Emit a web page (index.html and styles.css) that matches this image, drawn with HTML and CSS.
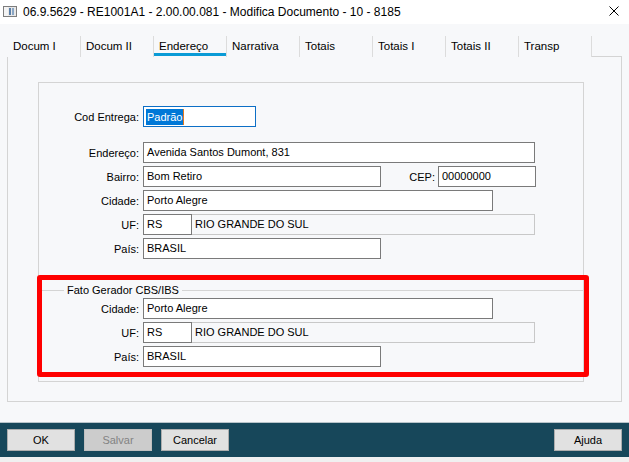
FILE: index.html
```
<!DOCTYPE html>
<html>
<head>
    <title>Modifica Documento</title>
    <link rel="stylesheet" href="styles.css">
</head>
<body>
    <div class="titlebar">
        <svg class="app-icon" width="14" height="11" viewBox="0 0 14 11">
            <rect x="0.5" y="0.5" width="13" height="10" fill="#e8e8e8" stroke="#7d7d7d"/>
            <rect x="1" y="1" width="4" height="9" fill="#f4f4f4"/>
            <rect x="6" y="2" width="2" height="7" fill="#5a7fa8"/>
            <rect x="9" y="2" width="2" height="7" fill="#8aa6c4"/>
        </svg>
        <span class="title">06.9.5629 - RE1001A1 - 2.00.00.081 - Modifica Documento - 10 - 8185</span>
        <svg class="close" width="10" height="10" viewBox="0 0 10 10">
            <path d="M0.5 0.5 L9.5 9.5 M9.5 0.5 L0.5 9.5" stroke="#000" stroke-width="1"/>
        </svg>
    </div>

    <div class="tabs">
        <div class="tab">Docum I</div>
        <div class="tab">Docum II</div>
        <div class="tab active">Endereço</div>
        <div class="tab">Narrativa</div>
        <div class="tab">Totais</div>
        <div class="tab">Totais I</div>
        <div class="tab">Totais II</div>
        <div class="tab">Transp</div>
        <div class="tab-rest"></div>
    </div>

    <div class="page">
        <div class="group">
            <div class="row first">
                <label>Cod Entrega:</label>
                <div class="field focus w-cod"><span class="sel">Padrão</span><span class="caret"></span></div>
            </div>

            <div class="row">
                <label>Endereço:</label>
                <div class="field w-full">Avenida Santos Dumont, 831</div>
            </div>
            <div class="row">
                <label>Bairro:</label>
                <div class="field w-mid">Bom Retiro</div>
                <label class="cep">CEP:</label>
                <div class="field w-cep">00000000</div>
            </div>
            <div class="row">
                <label>Cidade:</label>
                <div class="field w-city">Porto Alegre</div>
            </div>
            <div class="row">
                <label>UF:</label>
                <div class="field w-uf">RS</div>
                <div class="field off w-ufdesc">RIO GRANDE DO SUL</div>
            </div>
            <div class="row">
                <label>País:</label>
                <div class="field w-mid">BRASIL</div>
            </div>

            <div class="subgroup">
                <div class="legend"><span>Fato Gerador CBS/IBS</span></div>
                <div class="row tight">
                    <label>Cidade:</label>
                    <div class="field w-city">Porto Alegre</div>
                </div>
                <div class="row">
                    <label>UF:</label>
                    <div class="field w-uf">RS</div>
                    <div class="field off w-ufdesc">RIO GRANDE DO SUL</div>
                </div>
                <div class="row">
                    <label>País:</label>
                    <div class="field w-mid">BRASIL</div>
                </div>
            </div>
        </div>
    </div>

    <div class="footer">
        <button class="btn">OK</button>
        <button class="btn disabled">Salvar</button>
        <button class="btn">Cancelar</button>
        <div class="spacer"></div>
        <button class="btn">Ajuda</button>
    </div>
    <div class="bottom-strip"></div>

    <div class="highlight"></div>
</body>
</html>
```

FILE: styles.css
```
body {
    margin: 0;
    width: 629px;
    height: 462px;
    overflow: hidden;
    background: #f7f8fa;
    font-family: "Liberation Sans", Arial, sans-serif;
    font-size: 11px;
    color: #000;
    position: relative;
}

.titlebar {
    height: 24px;
    background: #fff;
    display: flex;
    align-items: center;
}
.app-icon { margin-left: 3px; margin-top: -1px; }
.title { margin-left: 6px; font-size: 12px; margin-top: -1px; }
.close { margin-left: auto; margin-right: 10px; margin-top: -2px; }

.tabs {
    display: flex;
    padding: 12px 0 0 8px;
    height: 21px;
}
.tab {
    width: 67px;
    border-right: 1px solid #dcdcdc;
    padding-left: 5px;
    line-height: 20px;
    font-size: 11.5px;
    position: relative;
}
.tab.active::after {
    content: "";
    position: absolute;
    left: 0;
    right: 0;
    bottom: 1px;
    height: 3px;
    background: #0a9bd6;
}
.tab-rest {
    flex: 1;
    margin-right: 7px;
    border-bottom: 1px solid #d4d4d4;
}

.page {
    margin: 0 7px;
    height: 345px;
    border: 1px solid #d4d4d4;
    border-top: none;
    padding: 25px 0 0 30px;
    box-sizing: border-box;
}

.group {
    width: 546px;
    height: 300px;
    border: 1px solid #d4d4d4;
    box-sizing: border-box;
    padding-top: 23px;
}

.row {
    display: flex;
    align-items: center;
    height: 21px;
    margin-bottom: 3px;
}
.row.first { margin-bottom: 15px; }
.row label {
    width: 100px;
    text-align: right;
    margin-right: 4px;
}
.row label.cep {
    width: auto;
    margin-left: auto;
    margin-right: 3px;
}

.field {
    height: 21px;
    box-sizing: border-box;
    border: 1px solid #7a7a7a;
    background: #fff;
    padding-left: 3px;
    line-height: 19px;
    white-space: nowrap;
    overflow: hidden;
}
.field.off {
    border-color: #c8c8c8;
    background: #f7f8fa;
    border-left: none;
}
.field.focus {
    border-color: #0d6fc6;
    display: flex;
    align-items: center;
    padding-left: 2px;
}
.sel {
    background: #0078d7;
    color: #fff;
    line-height: 16px;
    padding: 0 1px;
}
.caret {
    width: 1px;
    height: 16px;
    background: #e57a1f;
}

.w-cod { width: 113px; }
.w-full { width: 392px; }
.w-mid { width: 238px; }
.w-cep { width: 98px; margin-right: 47px; }
.w-city { width: 350px; }
.w-uf { width: 49px; }
.w-ufdesc { width: 343px; }

.subgroup {
    margin-top: 24px;
}
.legend {
    height: 14px;
    display: flex;
    align-items: center;
    margin-left: 3px;
    margin-bottom: -6px;
}
.legend::before {
    content: "";
    width: 22px;
    border-top: 1px solid #d4d4d4;
}
.legend::after {
    content: "";
    flex: 1;
    border-top: 1px solid #d4d4d4;
}
.legend span {
    padding: 0 3px;
}
.row.tight { margin-top: 7px; }

.footer {
    margin-top: 20px;
    height: 34px;
    background: #17475a;
    border-top: 1px solid #b8c4ca;
    display: flex;
    align-items: center;
    padding: 0 7px;
    gap: 9px;
}
.spacer { flex: 1; }
.btn {
    width: 68px;
    height: 22px;
    background: #e1e1e1;
    border: 1px solid #adadad;
    font-family: "Liberation Sans", Arial, sans-serif;
    font-size: 11px;
    color: #000;
    padding: 0;
}
.btn.disabled {
    background: #cccccc;
    border-color: #bfbfbf;
    color: #838383;
}
.bottom-strip {
    height: 5px;
    background: #f0f0f0;
}

.highlight {
    position: absolute;
    left: 37px;
    top: 275px;
    width: 552px;
    height: 102px;
    box-sizing: border-box;
    border: 5px solid #ff0000;
    border-radius: 3px;
}
```
